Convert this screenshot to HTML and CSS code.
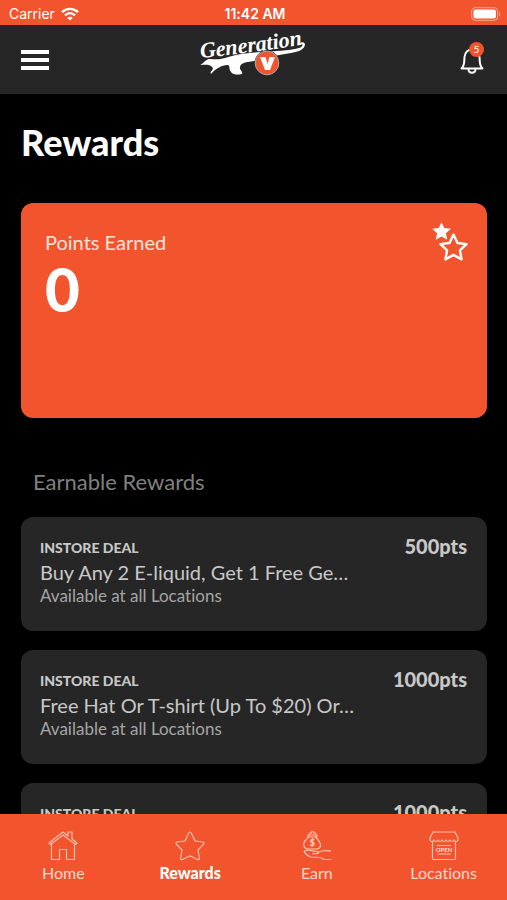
FILE: index.html
```html
<!DOCTYPE html>
<html lang="en">
<head>
    <meta charset="UTF-8">
    <meta name="viewport" content="width=device-width, initial-scale=1.0">
    <title>Rewards - Generation V</title>
    <link rel="stylesheet" href="styles.css">
</head>
<body>
    <div class="status-bar">
        <div class="carrier">
            <span>Carrier</span>
            <svg width="18" height="14" viewBox="0 0 18 14" fill="none" stroke="#fff" stroke-width="2.4">
                <path d="M1 5.2C5.500 .7 12.500 .7 17 5.200"/>
                <path d="M4 8.400c3-2.900 7-2.900 10 0"/>
                <path d="M9 13.600 6.300 10.900c1.500-1.400 3.900-1.400 5.400 0z" fill="#fff" stroke="none"/>
            </svg>
        </div>
        <span class="time">11:42 AM</span>
        <div class="battery">
            <svg width="30" height="14" viewBox="0 0 30 14">
                <rect x=".7" y=".7" width="26" height="12.600" rx="3.500" fill="none" stroke="#fff" stroke-opacity=".5"/>
                <rect x="2.500" y="2.500" width="22.400" height="9" rx="2" fill="#fff"/>
                <path d="M28 5v4c1.600-.6 1.600-3.400 0-4z" fill="#fff" fill-opacity=".5"/>
            </svg>
        </div>
    </div>

    <header class="header">
        <button type="button" class="menu-button" aria-label="Menu">
            <span></span>
            <span></span>
            <span></span>
        </button>
        <a href="#" class="logo" aria-label="Generation V">
            <svg width="108" height="46" viewBox="0 -4 108 46">
                <path d="M1 29c3-1 5-5 9-6 6 0 10 1 16-1 10-4 24-5 36-6 14-1 27-1 38-4 3-1 5-4 2-4l-2 1c0-3 5-4 6-1 0 6-8 8-14 9-12 2-24 4-36 8-7 1-14 1-15 6-1 3 3 4 2 7-4 1-9 1-11-2-3-4 0-7-4-7-5 0-12 4-16 9-2-3 4-4 1-7-3-3-6-2-12-2z" fill="#fff"/>
                <path id="curve" d="M2 22Q52 17 108 8" fill="none"/>
                <text class="logo-text"><textPath href="#curve">Generation</textPath></text>
                <circle cx="68" cy="27" r="12.500" fill="#262626"/>
                <circle cx="68" cy="27" r="11.800" fill="#f2542d" stroke="#aaa"/>
                <path d="M61 21h5.500l2 7 2-7H76l-5 13h-5z" fill="#fff"/>
            </svg>
        </a>
        <button type="button" class="bell-button" aria-label="Notifications">
            <svg width="24" height="28" viewBox="0 0 24 28" fill="none" stroke="#fff" stroke-width="2" stroke-linejoin="round">
                <path d="M1.500 22.500c3.500-3.500 2.500-7 3-11.500C5 6.500 8 3.500 12 3.500s7 3 7.500 7.500c.5 4.500-.5 8 3 11.500z"/>
                <path d="M8.500 23c0 5 7 5 7 0"/>
            </svg>
            <span class="badge">5</span>
        </button>
    </header>

    <main class="content">
        <h1>Rewards</h1>

        <section class="points-card">
            <div>
                <h2>Points Earned</h2>
                <p class="points">0</p>
            </div>
            <svg width="36" height="40" viewBox="0 0 36 40">
                <path d="m9.500 0 2.700 6 6.700.7-5 4.500 1.400 6.500-5.800-3.300-5.800 3.300 1.400-6.500-5-4.500 6.700-.7z" fill="#fff"/>
                <path d="m21.500 12.500 4 8.500 9 1.100-6.600 6.300 1.700 9-8.100-4.500-8.100 4.500 1.700-9-6.600-6.300 9-1.100z" fill="#f2542d" stroke="#fff" stroke-width="2.400" stroke-linejoin="round"/>
            </svg>
        </section>

        <h2 class="list-title">Earnable Rewards</h2>

        <ul class="rewards">
            <li class="reward">
                <div>
                    <p class="type">INSTORE DEAL</p>
                    <h3>Buy Any 2 E-liquid, Get 1 Free Ge…</h3>
                    <p class="place">Available at all Locations</p>
                </div>
                <span class="cost">500pts</span>
            </li>
            <li class="reward">
                <div>
                    <p class="type">INSTORE DEAL</p>
                    <h3>Free Hat Or T-shirt (Up To $20) Or…</h3>
                    <p class="place">Available at all Locations</p>
                </div>
                <span class="cost">1000pts</span>
            </li>
            <li class="reward">
                <div>
                    <p class="type">INSTORE DEAL</p>
                </div>
                <span class="cost">1000pts</span>
            </li>
        </ul>
    </main>

    <nav class="tabs">
        <a href="#">
            <svg width="30" height="30" viewBox="0 0 30 30">
                <path d="M1 12 15 1l5 4V1h4v7l5 4-1.500 1.500L15 4 2.500 13.500zM3.500 13v15.500h8v-10h7v10h8V13"/>
            </svg>
            <span>Home</span>
        </a>
        <a href="#" class="active">
            <svg width="30" height="30" viewBox="0 0 30 30">
                <path d="M15 1c.8 0 1.200.8 1.500 1.500L20 10l8 1c1.200.2 1.400 1.400.6 2.200L23 19l1.400 8.300c.2 1.200-.8 1.700-1.800 1.200L15 24.700l-7.600 3.800c-1 .5-2 0-1.800-1.200L7 19l-5.600-5.800C.6 12.400.8 11.200 2 11l8-1 3.500-7.500C13.800 1.800 14.200 1 15 1z"/>
            </svg>
            <span>Rewards</span>
        </a>
        <a href="#">
            <svg width="30" height="30" viewBox="0 0 30 30">
                <path d="M7 6C3 9 1 12 2 15c.5 2 2 3 4 3h8c2 0 4-1 4.500-3 .5-3-2-6-5-9zM6 4h9v2H6zM7.500 4V2h2V.7h2.200V2h2v2"/>
                <path d="M2 20c3 0 4-1.500 7-.5 2 .7 3 1 6 .8 2 0 2 2.200 0 2.400H10M15 22l5-2c2-1 4 0 9 0M2 20c1 3 4 5 7 6l8 .5c3 0 4 2 6 2h6"/>
                <text class="coin" x="10.300" y="15">$</text>
            </svg>
            <span>Earn</span>
        </a>
        <a href="#">
            <svg width="30" height="30" viewBox="0 0 30 30">
                <path d="M4 1h22l3 6v2c-1 2-3 2-4 0-1 2-3 2-4 0-1 2-3 2-4 0-1 2-3 2-4 0-1 2-3 2-4 0-1 2-3 2-4 0-1 2-3 2-4 0V7zM3.500 10.500V27q0 1.500 1.500 1.500h20q1.500 0 1.500-1.500V10.500M8 14.500h14M8 23h14"/>
                <text class="sign" x="15" y="21">OPEN</text>
            </svg>
            <span>Locations</span>
        </a>
    </nav>
</body>
</html>
```
FILE: styles.css
```css
* {
    box-sizing: border-box;
}
body {
    font-family: Lato, sans-serif;
    font-variant-ligatures: none;
    margin: 0;
    height: 100vh;
    display: flex;
    flex-direction: column;
    background: #000;
    color: #fff;
}
h1, h2, h3, p, ul {
    margin: 0;
    padding: 0;
}
button {
    background: none;
    border: none;
    padding: 0;
    cursor: pointer;
}
svg {
    display: block;
}
.status-bar {
    display: grid;
    grid-template-columns: 1fr auto 1fr;
    align-items: center;
    height: 25px;
    flex-shrink: 0;
    padding: 2px 6px 0 9px;
    background: #f2542d;
    font-family: Inter, sans-serif;
    font-size: 14px;
}
.carrier {
    display: flex;
    align-items: center;
    gap: 6px;
}
.time {
    font-weight: 600;
}
.battery {
    justify-self: end;
}
.header {
    display: grid;
    grid-template-columns: 1fr auto 1fr;
    align-items: center;
    height: 69px;
    flex-shrink: 0;
    padding: 0 23px 0 21px;
    background: #262626;
}
.menu-button {
    display: flex;
    flex-direction: column;
    gap: 4px;
    width: 28px;
}
.menu-button span {
    height: 4px;
    background: #fff;
}
.logo {
    padding-bottom: 10px;
}
.logo-text {
    font: italic bold 22px "Liberation Serif", serif;
    fill: #fff;
}
.bell-button {
    position: relative;
    justify-self: end;
}
.badge {
    position: absolute;
    top: -4px;
    right: 0;
    width: 15px;
    height: 15px;
    border-radius: 50%;
    background: #f2542d;
    color: #fff;
    font: 10px/15px Lato, sans-serif;
    text-align: center;
}
.content {
    flex: 1;
    min-height: 0;
    padding: 28px 20px 0 21px;
    overflow-y: auto;
    scrollbar-width: none;
}
h1 {
    font-size: 36px;
    font-weight: 900;
    line-height: 40px;
}
.points-card {
    display: flex;
    justify-content: space-between;
    min-height: 215px;
    margin-top: 41px;
    padding: 19px 19px 20px 24px;
    border-radius: 12px;
    background: #f2542d;
}
.points-card h2 {
    font-size: 20px;
    font-weight: 400;
    line-height: 40px;
    color: #ffe4dc;
}
.points {
    font-size: 60px;
    font-weight: 900;
    line-height: 54px;
}
.list-title {
    margin: 49px 12px 20px;
    font-size: 22px;
    font-weight: 400;
    line-height: 30px;
    color: #808080;
}
.rewards {
    list-style: none;
    display: grid;
    gap: 19px;
}
.reward {
    display: flex;
    justify-content: space-between;
    min-height: 114px;
    padding: 19px 20px 19px 19px;
    border-radius: 12px;
    background: #262626;
    color: #c8c8c8;
    white-space: nowrap;
}
.type {
    font-size: 14px;
    font-weight: 900;
    line-height: 24px;
}
.reward h3 {
    font-size: 20px;
    font-weight: 400;
    line-height: 24px;
}
.place {
    font-size: 17px;
    line-height: 24px;
    color: #a5a5a5;
}
.cost {
    font-size: 20px;
    font-weight: 900;
    line-height: 20px;
}
.tabs {
    display: grid;
    grid-template-columns: repeat(4, 1fr);
    flex-shrink: 0;
    height: 86px;
    padding-top: 17px;
    background: #f2542d;
}
.tabs a {
    display: flex;
    flex-direction: column;
    align-items: center;
    gap: 2px;
    color: #ffd9cd;
    font-size: 16px;
    line-height: 20px;
    text-decoration: none;
}
.tabs .active {
    color: #fff;
    font-weight: 900;
}
.tabs path {
    fill: none;
    stroke: #ffc0ab;
    stroke-width: 1.2;
    stroke-linejoin: round;
}
.coin, .sign {
    fill: #ffd9cd;
    text-anchor: middle;
    font-weight: 900;
}
.coin {
    font-size: 9px;
}
.sign {
    font-size: 6px;
}
```
